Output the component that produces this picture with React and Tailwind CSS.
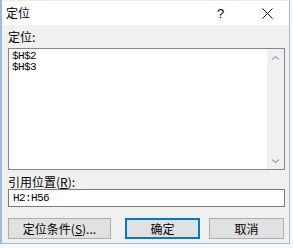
import React from "react";

const cjk = "font-['Noto_Sans_CJK_SC','Noto_Sans_CJK_JP',sans-serif]";
const mono = "font-['Liberation_Mono','Noto_Sans_CJK_SC',monospace]";

const Chevron = ({ down }) => (
  <svg width="9" height="6" viewBox="0 0 9 6" className="text-[#a6a6a6]">
    <path
      d={down ? "M1 1.5 L4.5 4.5 L8 1.5" : "M1 4.5 L4.5 1.5 L8 4.5"}
      fill="none"
      stroke="currentColor"
      strokeWidth="1.2"
    />
  </svg>
);

const Button = ({ children, primary, className = "" }) => (
  <button
    className={`h-[21px] flex items-center justify-center bg-[#e1e1e1] text-[12px] leading-none ${
      primary ? "border-2 border-[#0078d7]" : "border border-[#adadad]"
    } ${className}`}
  >
    {children}
  </button>
);

export default function App() {
  return (
    <div className={`w-[293px] h-[248px] bg-[#f6f8fb] text-black ${cjk}`}>
      <div className="w-[290px] h-[244px] border-l-2 border-r border-b border-[#9bbbe0] flex flex-col">
        {/* title bar */}
        <div className="h-[25px] bg-white border-t border-[#f5e9df] flex items-center">
          <span className="ml-[4px] text-[12px] leading-none">定位</span>
          <div className="flex-1" />
          <div className="w-[47px] pl-[4px] flex justify-center text-[13px] leading-none font-['Liberation_Sans',sans-serif]">
            ?
          </div>
          <div className="w-[47px] pl-[4px] flex justify-center">
            <svg width="11" height="11" viewBox="0 0 11 11">
              <path d="M0.5 0.5 L10.5 10.5 M10.5 0.5 L0.5 10.5" stroke="#111" strokeWidth="1" />
            </svg>
          </div>
        </div>

        {/* body */}
        <div className="flex-1 bg-[#f0f0f0] pl-[6px] flex flex-col">
          <div className="mt-[6px] h-[12px] text-[12px] leading-[12px]">定位:</div>

          <div className="mt-[5px] w-[277px] h-[122px] border border-[#828790] bg-white flex">
            <div className={`flex-1 pt-[2px] pl-[3px] text-[11px] leading-[11px] tracking-[-0.6px] ${mono}`}>
              <div>$H$2</div>
              <div>$H$3</div>
            </div>
            <div className="w-[17px] bg-[#f0f0f0] flex flex-col justify-between">
              <div className="h-[17px] flex items-center justify-center">
                <Chevron />
              </div>
              <div className="h-[17px] flex items-center justify-center">
                <Chevron down />
              </div>
            </div>
          </div>

          <div className="mt-[6px] h-[12px] text-[12px] leading-[12px]">
            引用位置(<span className="underline">R</span>):
          </div>

          <div className="mt-[1px] w-[277px] h-[18px] border border-[#7a7a7a] bg-white flex items-center">
            <span className={`pl-[4px] text-[11px] leading-none tracking-[-0.6px] ${mono}`}>H2:H56</span>
          </div>

          <div className="mt-[11px] flex">
            <Button className="w-[103px]">
              定位条件(<span className="underline">S</span>)...
            </Button>
            <Button primary className="ml-[14px] w-[75px]">
              确定
            </Button>
            <Button className="ml-[9px] w-[75px]">取消</Button>
          </div>
        </div>
      </div>
    </div>
  );
}
